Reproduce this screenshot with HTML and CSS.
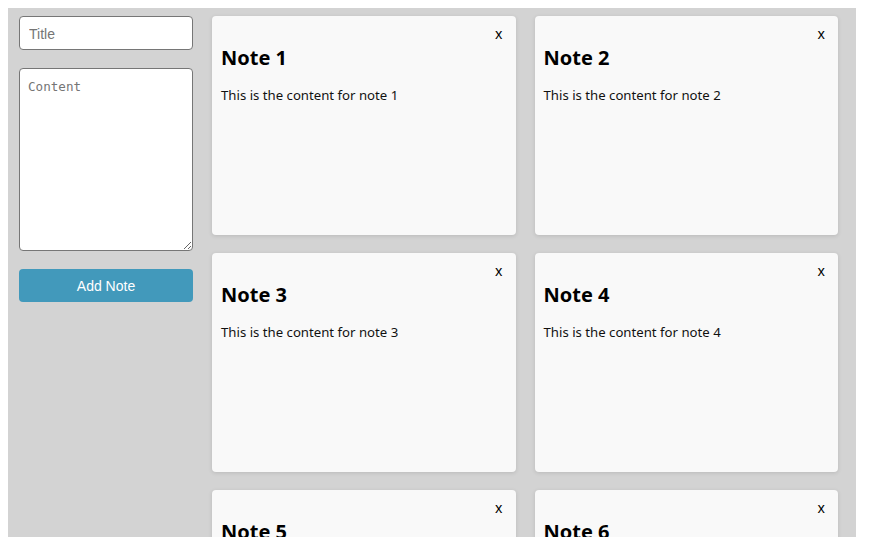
FILE: index.html
```html
<!DOCTYPE html>
<html>
<head>
<meta charset="utf-8">
<link rel="stylesheet" href="styles.css">
</head>
<body>
<div class="app">
  <div class="sidebar">
    <input class="title-input" type="text" placeholder="Title">
    <textarea class="content-input" placeholder="Content"></textarea>
    <button class="add-btn">Add Note</button>
  </div>
  <div class="notes">
    <div class="note"><button class="close">x</button><h2>Note 1</h2><p>This is the content for note 1</p></div>
    <div class="note"><button class="close">x</button><h2>Note 2</h2><p>This is the content for note 2</p></div>
    <div class="note"><button class="close">x</button><h2>Note 3</h2><p>This is the content for note 3</p></div>
    <div class="note"><button class="close">x</button><h2>Note 4</h2><p>This is the content for note 4</p></div>
    <div class="note"><button class="close">x</button><h2>Note 5</h2><p>This is the content for note 5</p></div>
    <div class="note"><button class="close">x</button><h2>Note 6</h2><p>This is the content for note 6</p></div>
  </div>
</div>
</body>
</html>
```
FILE: styles.css
```css
html, body {
  margin: 0;
  padding: 0;
  background: #fff;
  overflow: hidden;
}
body {
  padding: 8px 14px 0 8px;
}
.app {
  width: 848px;
  height: 529px;
  overflow: hidden;
  background: #d3d3d3;
  display: flex;
  gap: 19px;
  padding: 8px 18px 0 11px;
  box-sizing: border-box;
  font-family: "Noto Sans", "Open Sans", sans-serif;
}
.sidebar {
  width: 174px;
  flex: none;
  display: flex;
  flex-direction: column;
}
.title-input {
  height: 34px;
  box-sizing: border-box;
  border: 1px solid #767676;
  border-radius: 4px;
  padding: 1px 9px 0;
  font-family: "Liberation Sans", Arial, sans-serif;
  font-size: 14px;
  margin: 0 0 18px;
}
.title-input::placeholder { color: #757575; }
.content-input {
  height: 183px;
  box-sizing: border-box;
  border: 1px solid #767676;
  border-radius: 4px;
  padding: 10px 8px;
  font-family: "DejaVu Sans Mono", "Liberation Mono", monospace;
  font-size: 12.6px;
  margin: 0 0 18px;
  resize: vertical;
}
.content-input::placeholder { color: #757575; }
.add-btn {
  height: 33px;
  border: none;
  border-radius: 4px;
  background: #4299bb;
  color: #fff;
  font-family: "Liberation Sans", Arial, sans-serif;
  font-size: 14px;
}
.notes {
  flex: 1;
  display: grid;
  grid-template-columns: 1fr 1fr;
  grid-auto-rows: 219px;
  column-gap: 19px;
  row-gap: 18px;
}
.note {
  position: relative;
  background: #f9f9f9;
  border-radius: 4px;
  box-shadow: 0 1px 4px rgba(0,0,0,0.12);
  padding: 28px 9px 9px;
}
.note h2 {
  margin: 0;
  font-size: 20px;
  font-weight: 700;
  line-height: 28px;
  color: #000;
}
.note p {
  margin: 14px 0 0;
  font-size: 13.2px;
  line-height: 18px;
  color: #111;
}
.close {
  position: absolute;
  top: 6px;
  right: 9px;
  border: none;
  background: none;
  padding: 4px;
  font-family: "Noto Sans", sans-serif;
  font-size: 14px;
  line-height: 16px;
  color: #000;
}
```
